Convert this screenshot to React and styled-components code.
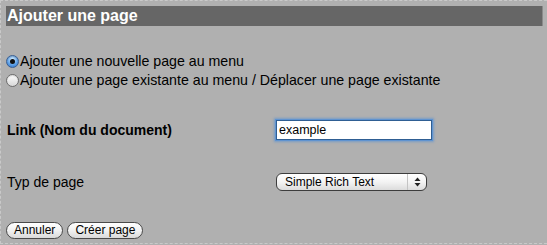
import styled, { createGlobalStyle } from "styled-components";

const GlobalStyle = createGlobalStyle`
    html, body {
        margin: 0;
        padding: 0;
        background: #b0b0b0;
        overflow: hidden;
    }
    body {
        font-family: "Liberation Sans", Arial, sans-serif;
        font-size: 14px;
        color: #000;
    }
`

function App() {
    return (
        <>
            <GlobalStyle />
            <Panel>
                <Title>Ajouter une page</Title>
                <RadioGroup>
                    <RadioRow>
                        <Radio type="radio" name="mode" defaultChecked />
                        Ajouter une nouvelle page au menu
                    </RadioRow>
                    <RadioRow>
                        <Radio type="radio" name="mode" />
                        Ajouter une page existante au menu / Déplacer une page existante
                    </RadioRow>
                </RadioGroup>
                <FormRow $top={32}>
                    <Label $bold>Link (Nom du document)</Label>
                    <TextInput defaultValue="example" />
                </FormRow>
                <FormRow $top={33}>
                    <Label>Typ de page</Label>
                    <SelectBox>
                        <span>Simple Rich Text</span>
                        <SelectArrows>
                            <svg width="7" height="10" viewBox="0 0 7 10">
                                <path d="M3.5 0.5 L6.5 4 L0.5 4 Z" fill="#222" />
                                <path d="M3.5 9.5 L6.5 6 L0.5 6 Z" fill="#222" />
                            </svg>
                        </SelectArrows>
                    </SelectBox>
                </FormRow>
                <Buttons>
                    <Button>Annuler</Button>
                    <Button>Créer page</Button>
                </Buttons>
            </Panel>
        </>
    )
}

const Panel = styled.div`
    width: 560px;
    height: 232px;
    border: 1px dashed #c9c9c9;
    padding: 5px;
    display: flex;
    flex-direction: column;
`
const Title = styled.div`
    width: 537px;
    height: 20px;
    box-sizing: border-box;
    background: #666666;
    border-right: 1px solid #8a8a8a;
    color: #ffffff;
    font-weight: bold;
    font-size: 16px;
    line-height: 20px;
    padding-left: 1px;
`
const RadioGroup = styled.div`
    margin-top: 27px;
    display: flex;
    flex-direction: column;
    gap: 3px;
`
const RadioRow = styled.label`
    display: flex;
    align-items: center;
    height: 16px;
    font-size: 14.2px;
`
const Radio = styled.input`
    appearance: none;
    margin: 0 1px 0 0;
    width: 13px;
    height: 13px;
    border-radius: 50%;
    border: 1px solid #6d6d6d;
    box-sizing: border-box;
    background: linear-gradient(#fdfdfd, #d8d8d8);
    box-shadow: inset 0 1px 1px rgba(0, 0, 0, 0.15);
    position: relative;
    &:checked {
        border-color: #3a5f92;
        background: radial-gradient(circle at 50% 30%, #d4ecff, #5a9ee6 60%, #3270c4);
    }
    &:checked::after {
        content: "";
        position: absolute;
        left: 3px;
        top: 3px;
        width: 5px;
        height: 5px;
        border-radius: 50%;
        background: #111;
    }
`
const FormRow = styled.div`
    margin-top: ${props => props.$top}px;
    display: grid;
    grid-template-columns: 270px auto;
    align-items: center;
`
const Label = styled.div`
    padding-left: 1px;
    font-size: 14px;
    font-weight: ${props => (props.$bold ? "bold" : "normal")};
`
const TextInput = styled.input`
    width: 156px;
    height: 20px;
    box-sizing: border-box;
    border: 1px solid #2f5e93;
    outline: none;
    box-shadow: 0 0 0 1px #5f93d0, 0 0 2px 2px rgba(95, 147, 208, 0.7);
    padding: 0 2px;
    font-family: "Liberation Sans", Arial, sans-serif;
    font-size: 12.5px;
    background: #fff;
    caret-color: #000;
`
const SelectBox = styled.div`
    width: 151px;
    height: 18px;
    box-sizing: border-box;
    border: 1px solid #3d3d3d;
    border-radius: 6px;
    background: linear-gradient(#ffffff, #f3f3f3 50%, #dcdcdc);
    display: flex;
    align-items: center;
    justify-content: space-between;
    font-size: 12px;
    padding-left: 8px;
`
const SelectArrows = styled.div`
    width: 18px;
    height: 100%;
    border-left: 1px solid #c4c4c4;
    display: flex;
    align-items: center;
    justify-content: center;
`
const Buttons = styled.div`
    margin-top: 31px;
    display: flex;
    gap: 4px;
`
const Button = styled.button`
    height: 17px;
    padding: 0 7px;
    border: 1px solid #4a4a4a;
    border-radius: 9px;
    background: linear-gradient(#ffffff, #f1f1f1 50%, #d9d9d9);
    font-family: "Liberation Sans", Arial, sans-serif;
    font-size: 12px;
    line-height: 15px;
    color: #000;
`

export default App;
